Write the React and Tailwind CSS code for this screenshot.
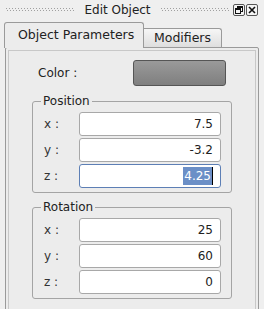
import React from 'react';

const dotCols = Array.from({ length: 26 }, (_, i) => i);

function Dots() {
  return (
    <div className="flex-1 min-w-0 overflow-hidden flex flex-col gap-[1px]">
      <div className="flex gap-[2px]">
        {dotCols.map((i) => (
          <span key={i} className="shrink-0 w-px h-px bg-[#a0a0a0]" />
        ))}
      </div>
      <div className="flex gap-[2px] pl-[1px]">
        {dotCols.map((i) => (
          <span key={i} className="shrink-0 w-px h-px bg-[#a0a0a0]" />
        ))}
      </div>
    </div>
  );
}

function Field({ label, value, focused }) {
  return (
    <div className="flex items-center h-[26px]">
      <span className="w-[36px] pl-[1px] text-[#333]">{label}</span>
      <div
        className={`flex-1 h-[24px] rounded-[3px] bg-white flex items-center justify-end pr-[7px] ${
          focused ? 'border border-[#5d7fb5]' : 'border border-[#a8a8a8]'
        }`}
      >
        {focused ? (
          <span className="flex items-center">
            <span className="bg-[#6b8fc7] text-white px-[1px] leading-[18px]">{value}</span>
            <span className="w-px h-[18px] bg-black" />
          </span>
        ) : (
          <span className="text-[#222]">{value}</span>
        )}
      </div>
    </div>
  );
}

function Group({ title, rows, top }) {
  return (
    <div className={`relative ${top} border border-[#a4a4a4] rounded-[3px] pt-[9px] pb-[3px] pl-[10px] pr-[10px]`}>
      <span className="absolute -top-[9px] left-[8px] bg-[#ececec] px-[2px] text-[#222] leading-[16px]">{title}</span>
      {rows.map((r) => (
        <Field key={r.label} {...r} />
      ))}
    </div>
  );
}

export default function App() {
  return (
    <div
      className="w-[264px] h-[309px] bg-[#efefef] overflow-hidden text-[12px] text-[#222]"
      style={{ fontFamily: '"DejaVu Sans", sans-serif' }}
    >
      {/* title bar */}
      <div className="h-[19px] flex items-center pl-[6px] pr-[6px] gap-[2px]">
        <Dots />
        <span className="px-[8px] text-[#222] shrink-0">Edit Object</span>
        <Dots />
        <div className="flex gap-[1px] ml-[2px] shrink-0">
          <div className="w-[12px] h-[12px] border border-[#555] rounded-[2px] bg-[#f4f4f4] flex items-center justify-center">
            <svg width="8" height="8" viewBox="0 0 8 8">
              <rect x="2.5" y="0.5" width="5" height="5" fill="none" stroke="#111" />
              <rect x="0.5" y="2.5" width="5" height="5" fill="#f4f4f4" stroke="#111" />
              <rect x="0.5" y="2.5" width="5" height="1.5" fill="#111" />
              <rect x="2.5" y="0.5" width="5" height="1.5" fill="#111" />
            </svg>
          </div>
          <div className="w-[12px] h-[12px] border border-[#555] rounded-[2px] bg-[#f4f4f4] flex items-center justify-center">
            <svg width="8" height="8" viewBox="0 0 8 8">
              <path d="M1 1 L7 7 M7 1 L1 7" stroke="#111" strokeWidth="1.6" />
            </svg>
          </div>
        </div>
      </div>

      {/* tabs */}
      <div className="flex items-end pl-[4px] mt-[5px] h-[23px]">
        <div className="w-[140px] h-[26px] border border-b-0 border-[#9a9a9a] rounded-t-[3px] bg-[#ececec] flex items-center pl-[13px] text-[12.5px] relative z-10 -mb-px">
          Object Parameters
        </div>
        <div className="w-[78px] h-[19px] border border-l-0 border-b-0 border-[#9a9a9a] rounded-tr-[3px] bg-gradient-to-b from-[#f6f6f6] to-[#dedede] flex items-center justify-center text-[12.5px]">
          Modifiers
        </div>
      </div>

      {/* panel */}
      <div className="mx-[5px] h-[270px] border border-[#9a9a9a] rounded-[2px] p-[2px] bg-[#ececec]">
        <div className="h-full border border-[#c8c8c8] pl-[23px] pr-[23px] pt-[9px]">
          <div className="flex items-center h-[26px]">
            <span className="w-[100px] pl-[6px] text-[#222]">Color :</span>
            <div className="w-[93px] h-[26px] ml-[1px] rounded-[3px] border border-[#555] bg-gradient-to-b from-[#9a9a9a] to-[#7f7f7f]" />
          </div>

          <Group
            top="mt-[15px]"
            title="Position"
            rows={[
              { label: 'x :', value: '7.5' },
              { label: 'y :', value: '-3.2' },
              { label: 'z :', value: '4.25', focused: true },
            ]}
          />
          <Group
            top="mt-[14px]"
            title="Rotation"
            rows={[
              { label: 'x :', value: '25' },
              { label: 'y :', value: '60' },
              { label: 'z :', value: '0' },
            ]}
          />
        </div>
      </div>
    </div>
  );
}
